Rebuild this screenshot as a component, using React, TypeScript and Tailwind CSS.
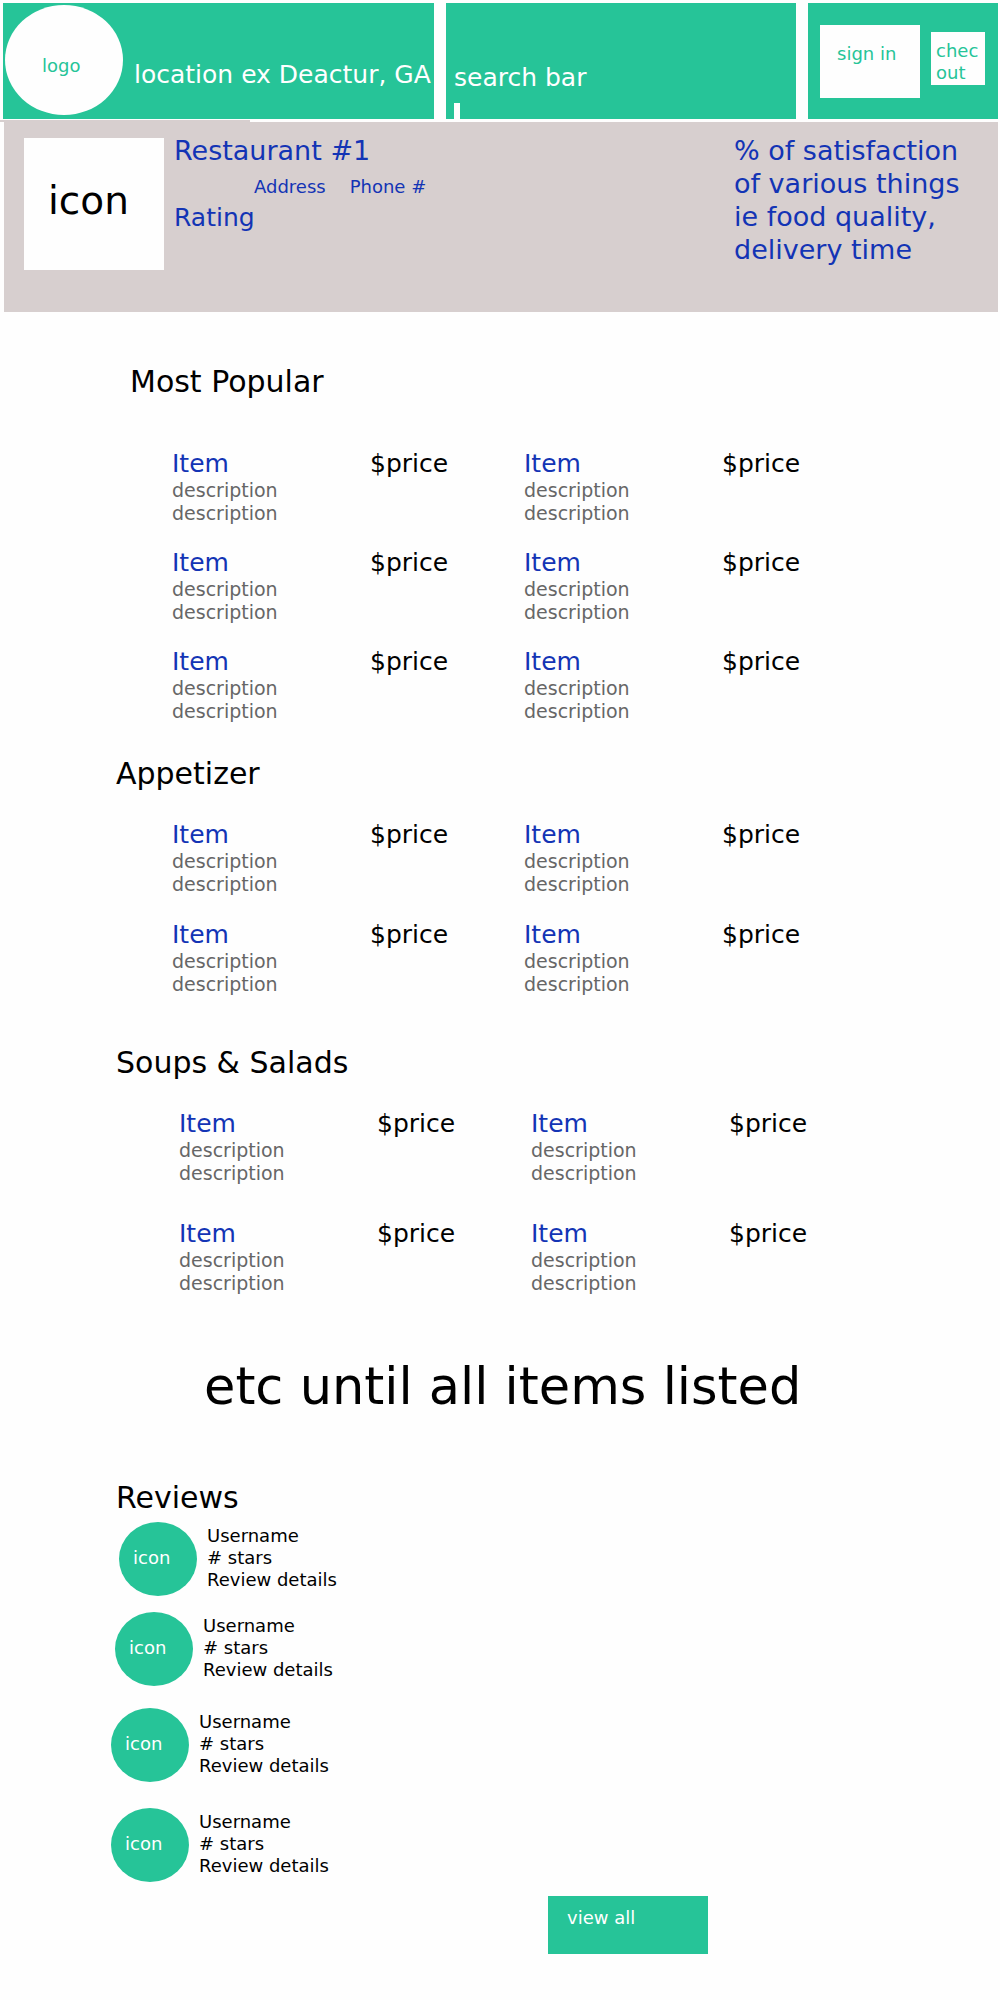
type MenuSection = {
  title: string;
  rows: number;
  headingClass: string;
  gridClass: string;
};

const sections: MenuSection[] = [
  {
    title: "Most Popular",
    rows: 3,
    headingClass: "mt-[52px] pl-[130px]",
    gridClass: "mt-[49px] gap-y-[23px] pl-[172px] pr-[124px]",
  },
  {
    title: "Appetizer",
    rows: 2,
    headingClass: "mt-[33px] pl-[116px]",
    gridClass: "mt-7 gap-y-6 pl-[172px] pr-[124px]",
  },
  {
    title: "Soups & Salads",
    rows: 2,
    headingClass: "mt-[49px] pl-[116px]",
    gridClass: "mt-7 gap-y-[34px] pl-[179px] pr-[117px]",
  },
];

const reviews = [
  { id: 1, rowClass: "mt-1.5 pl-2" },
  { id: 2, rowClass: "mt-4 pl-1" },
  { id: 3, rowClass: "mt-[22px]" },
  { id: 4, rowClass: "mt-[26px]" },
];

function Header() {
  return (
    <header className="grid h-[119px] grid-cols-[431fr_350fr_190fr] gap-x-3 pt-[3px] pr-0.5 pl-[3px] text-white">
      <div className="flex bg-[#26c498] pl-0.5">
        <a
          href="#home"
          className="mt-0.5 flex h-[110px] w-[118px] shrink-0 items-center rounded-[50%] bg-[#fefefe] pt-3 pl-[37px] text-lg leading-6 text-[#26c498]"
        >
          logo
        </a>
        <p className="mt-[57px] pl-[11px] text-[25px] leading-[30px] whitespace-nowrap">
          location ex Deactur, GA
        </p>
      </div>
      <form className="flex flex-col justify-between bg-[#26c498] pt-[60px] pl-2">
        <input
          type="search"
          aria-label="Search"
          placeholder="search bar"
          className="h-[30px] w-full text-[25px] leading-[30px] outline-none placeholder:text-white placeholder:opacity-100"
        />
        <span className="h-4 w-1.5 bg-[#fefefe]" />
      </form>
      <div className="flex bg-[#26c498] pl-3 text-lg leading-[22px] text-[#26c498]">
        <button
          type="button"
          className="mt-[22px] flex h-[73px] w-[100px] items-start bg-[#fefefe] pt-[18px] pl-[17px]"
        >
          sign in
        </button>
        <button
          type="button"
          className="mt-[29px] ml-[11px] flex h-[53px] w-[54px] items-start bg-[#fefefe] pt-2 pl-[5px] text-left"
        >
          chec
          <br />
          out
        </button>
      </div>
    </header>
  );
}

function Restaurant() {
  return (
    <div className="mt-px">
      <div className="h-0.5 w-1/4 bg-[#d7cfcf]" />
      <section className="mr-0.5 ml-1 flex h-[190px] items-start bg-[#d7cfcf] pt-3 pl-5 text-[#1334b5]">
        <div className="mt-1 flex h-[132px] w-[140px] shrink-0 items-center bg-[#fefefe] pb-1.5 pl-6 text-[39px] leading-10 text-black">
          icon
        </div>
        <div className="pl-2.5">
          <h1 className="text-[27px] leading-[33px]">Restaurant #1</h1>
          <p className="mt-2 flex gap-6 pl-20 text-lg leading-6">
            <span>Address</span>
            <span>Phone #</span>
          </p>
          <p className="mt-1 text-[25px] leading-[30px]">Rating</p>
        </div>
        <p className="ml-auto w-[264px] shrink-0 pr-6 text-[27px] leading-[33px]">
          % of satisfaction of various things ie food quality, delivery time
        </p>
      </section>
    </div>
  );
}

function MenuItem() {
  return (
    <li className="grid grid-cols-[9fr_7fr]">
      <div>
        <h3 className="text-[25px] leading-[30px] text-[#1334b5]">Item</h3>
        <p className="text-[19px] leading-[23px] text-[#666666]">
          description
          <br />
          description
        </p>
      </div>
      <p className="text-[25px] leading-[30px]">$price</p>
    </li>
  );
}

export default function App() {
  return (
    <div className="min-h-screen bg-[#fefefe] pb-11 font-['DejaVu_Sans',sans-serif] text-black">
      <Header />
      <Restaurant />
      <main>
        {sections.map((s) => (
          <section key={s.title}>
            <h2 className={`text-[30px] leading-9 ${s.headingClass}`}>{s.title}</h2>
            <ul className={`grid grid-cols-2 ${s.gridClass}`}>
              {Array.from({ length: s.rows * 2 }, (_, i) => (
                <MenuItem key={i} />
              ))}
            </ul>
          </section>
        ))}
        <p className="mt-[60px] pl-[204px] text-[51px] leading-[64px]">
          etc until all items listed
        </p>
        <section className="mt-[61px] pl-[111px]">
          <h2 className="pl-[5px] text-[30px] leading-9">Reviews</h2>
          {reviews.map((r) => (
            <article key={r.id} className={`flex text-lg leading-[22px] ${r.rowClass}`}>
              <div className="flex h-[74px] w-[78px] items-center rounded-[50%] bg-[#26c498] pb-0.5 pl-3.5 text-white">
                icon
              </div>
              <div className="pt-[3px] pl-2.5">
                <h3>Username</h3>
                <p># stars</p>
                <p>Review details</p>
              </div>
            </article>
          ))}
        </section>
        <div className="mt-3.5 grid grid-cols-[548fr_452fr]">
          <button
            type="button"
            className="col-start-2 flex h-[58px] w-40 items-start bg-[#26c498] pt-[11px] pl-[19px] text-lg leading-[22px] text-white"
          >
            view all
          </button>
        </div>
      </main>
    </div>
  );
}
